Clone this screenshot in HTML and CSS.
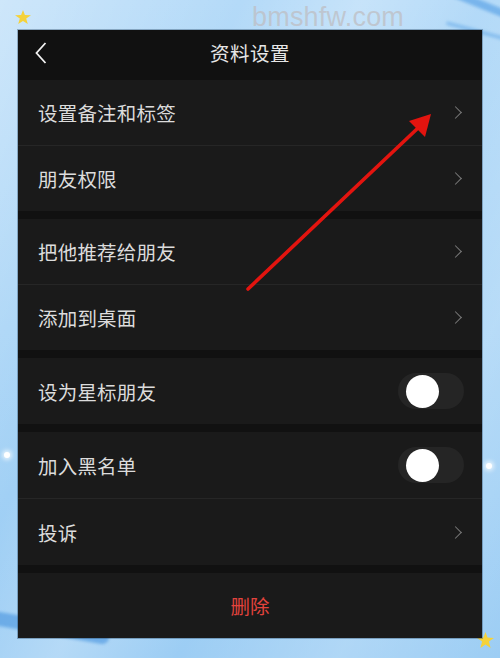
FILE: index.html
```html
<!DOCTYPE html>
<html lang="zh-CN">
<head>
<meta charset="utf-8">
<title>资料设置</title>
<link rel="stylesheet" href="styles.css">
</head>
<body>
<div class="stage">
  <span class="deco star star-tl"></span>
  <span class="deco star star-br"></span>
  <span class="deco dot dot-l"></span>
  <span class="deco dot dot-r"></span>
  <span class="deco stroke stroke-tr"></span>
  <span class="deco stroke stroke-tr2"></span>
  <span class="deco stroke stroke-bl"></span>
  <div class="watermark">bmshfw.com</div>

  <section class="phone">
    <header class="topbar">
      <svg class="back" width="12" height="22" viewBox="0 0 12 22"><path d="M10.5 1 L1.5 11 L10.5 21" fill="none" stroke="#f2f2f2" stroke-width="1.8"/></svg>
      <h1 class="title">资料设置</h1>
    </header>

    <div class="group">
      <div class="row"><span class="label">设置备注和标签</span><i class="chev"></i></div>
      <div class="row"><span class="label">朋友权限</span><i class="chev"></i></div>
    </div>
    <div class="group">
      <div class="row"><span class="label">把他推荐给朋友</span><i class="chev"></i></div>
      <div class="row"><span class="label">添加到桌面</span><i class="chev"></i></div>
    </div>
    <div class="group">
      <div class="row row-tall"><span class="label">设为星标朋友</span><span class="switch"><span class="knob"></span></span></div>
    </div>
    <div class="group">
      <div class="row row-tall"><span class="label">加入黑名单</span><span class="switch"><span class="knob"></span></span></div>
      <div class="row row-tall"><span class="label">投诉</span><i class="chev"></i></div>
    </div>
    <div class="group group-fill">
      <div class="row row-center"><span class="danger">删除</span></div>
    </div>
  </section>

  <svg class="pointer" width="500" height="658" viewBox="0 0 500 658">
    <line x1="248" y1="289" x2="418" y2="128" stroke="#e3140f" stroke-width="3.6" stroke-linecap="round"/>
    <polygon points="431,114 409,121 425,137" fill="#e3140f"/>
  </svg>
</div>
</body>
</html>
```

FILE: styles.css
```css
html, body {
  margin: 0;
  padding: 0;
}

body {
  width: 500px;
  height: 658px;
  overflow: hidden;
  font-family: "Noto Sans CJK SC", "Noto Sans", sans-serif;
}

.stage {
  position: relative;
  width: 500px;
  height: 658px;
  padding-top: 30px;
  box-sizing: border-box;
  background:
    linear-gradient(115deg, rgba(255,255,255,0.35) 0%, rgba(255,255,255,0) 30%, rgba(255,255,255,0.25) 45%, rgba(255,255,255,0) 60%, rgba(255,255,255,0.2) 80%, rgba(255,255,255,0) 100%),
    linear-gradient(180deg, #b4daf8 0%, #a6d3f6 50%, #9ccdf4 100%);
  overflow: hidden;
}

/* background decoration */
.deco {
  position: absolute;
  display: block;
}

.star {
  width: 16px;
  height: 14px;
  background: #f5d23a;
  clip-path: polygon(50% 0, 62% 35%, 100% 38%, 70% 60%, 80% 100%, 50% 78%, 20% 100%, 30% 60%, 0 38%, 38% 35%);
}
.star-tl { left: 15px; top: 10px; }
.star-br { left: 477px; top: 632px; width: 17px; height: 16px; }

.dot {
  width: 6px;
  height: 6px;
  border-radius: 50%;
  background: #ffffff;
  box-shadow: 0 0 4px 2px rgba(255,255,255,0.7);
}
.dot-l { left: 4px; top: 452px; }
.dot-r { left: 486px; top: 463px; }

.stroke {
  border-radius: 40px;
  background: rgba(70, 150, 225, 0.55);
  filter: blur(1.5px);
}
.stroke-tr { left: 440px; top: 2px; width: 90px; height: 8px; transform: rotate(22deg); }
.stroke-tr2 { left: 445px; top: 30px; width: 70px; height: 4px; transform: rotate(15deg); background: rgba(70,150,225,0.4); }
.stroke-bl { left: -20px; top: 620px; width: 130px; height: 14px; transform: rotate(10deg); background: rgba(60,140,220,0.55); }

.watermark {
  position: absolute;
  left: 252px;
  top: 1px;
  font-family: "Liberation Sans", Arial, sans-serif;
  font-size: 27px;
  color: rgba(190, 190, 195, 0.75);
  letter-spacing: 0.2px;
  line-height: 32px;
}

/* phone screen */
.phone {
  position: relative;
  margin-left: 18px;
  width: 464px;
  height: 608px;
  background: #111111;
  display: flex;
  flex-direction: column;
  gap: 8px;
  overflow: hidden;
  box-shadow: 0 0 0 1px rgba(30, 60, 90, 0.35);
}

.topbar {
  position: relative;
  height: 50px;
  flex: none;
  margin-bottom: -8px;
  padding-bottom: 6px;
  box-sizing: border-box;
  display: flex;
  align-items: center;
  justify-content: center;
  background: #111111;
}

.back {
  position: absolute;
  left: 17px;
  top: 12px;
}

.title {
  margin: 0;
  font-size: 19.5px;
  font-weight: 400;
  color: #e6e6e6;
  letter-spacing: 0.5px;
}

.group {
  background: #1a1a1a;
  display: flex;
  flex-direction: column;
  flex: none;
}

.group-fill {
  flex: 1;
}

.row {
  height: 65px;
  display: flex;
  align-items: center;
  justify-content: space-between;
  padding: 0 18px 0 20px;
}

.row-tall {
  height: 66px;
}

.row + .row {
  border-top: 1px solid #262626;
}

.label {
  font-size: 19.5px;
  color: #dcdcdc;
  letter-spacing: 0.2px;
}

.chev {
  width: 8px;
  height: 8px;
  border-top: 1.5px solid #7a7a7a;
  border-right: 1.5px solid #7a7a7a;
  transform: rotate(45deg);
  margin-right: 4px;
}

.switch {
  width: 66px;
  height: 36px;
  border-radius: 18px;
  background: #252525;
  display: flex;
  align-items: center;
  padding-left: 8px;
  box-sizing: border-box;
}

.knob {
  width: 33px;
  height: 33px;
  border-radius: 50%;
  background: #ffffff;
}

.row-center {
  flex: 1;
  justify-content: center;
  padding: 0;
}

.danger {
  font-size: 19.5px;
  color: #e3433d;
}

.pointer {
  position: absolute;
  left: 0;
  top: 0;
  pointer-events: none;
}
```
